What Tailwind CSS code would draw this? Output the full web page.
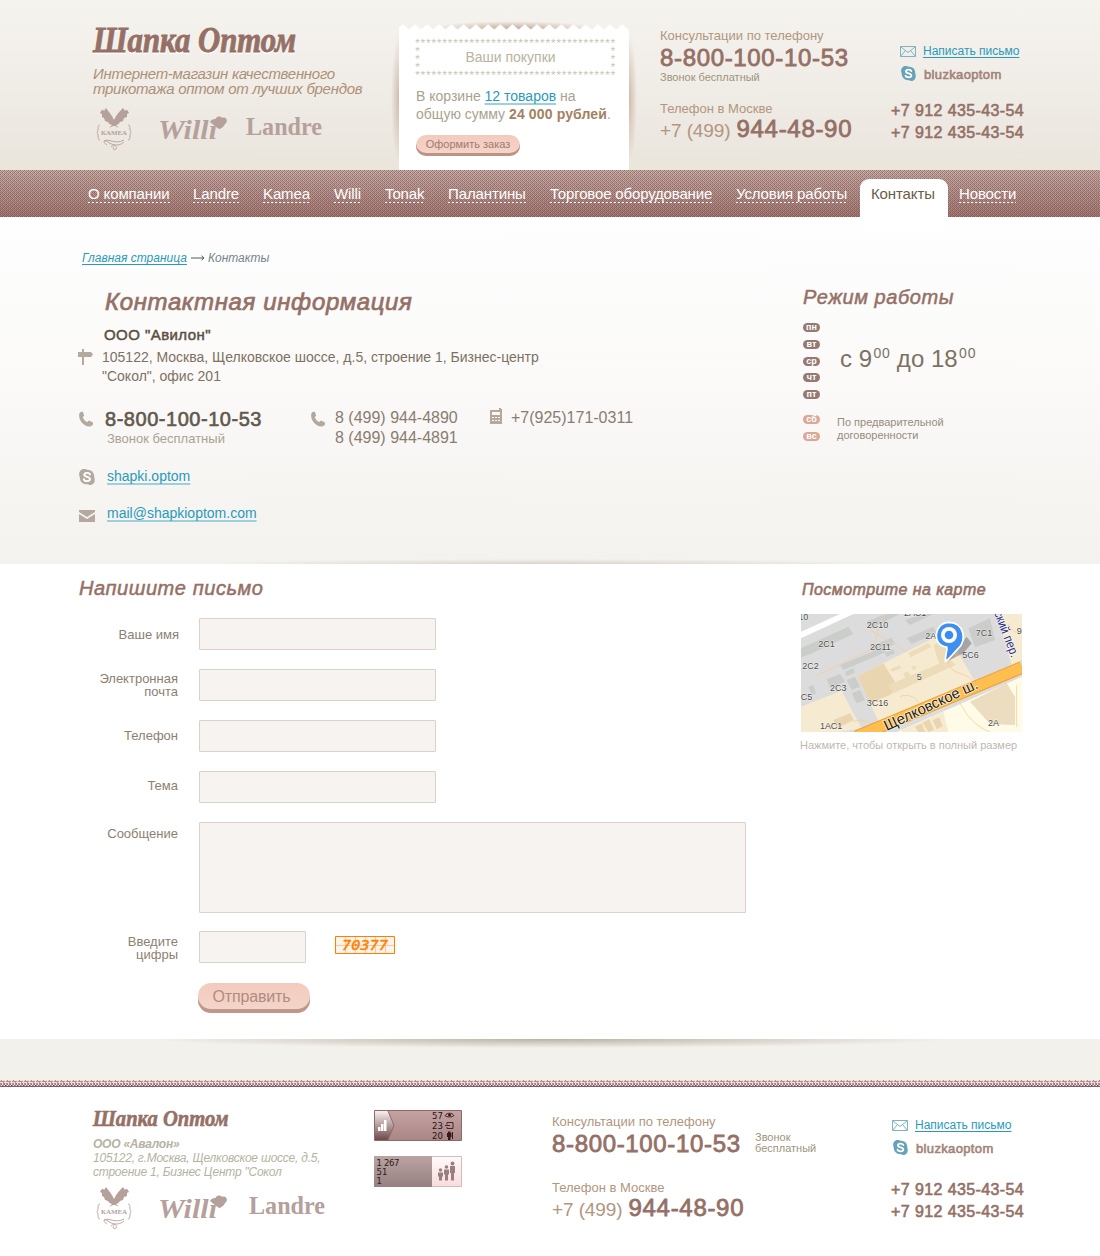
<!DOCTYPE html>
<html lang="ru">
<head>
<meta charset="utf-8">
<title>Шапка Оптом — Контакты</title>
<script src="https://cdn.jsdelivr.net/npm/@tailwindcss/browser@4"></script>
</head>
<body class="w-[1100px] h-[1256px] overflow-hidden bg-white font-['Liberation_Sans',Arial,sans-serif] whitespace-nowrap">

<!-- shared symbols -->
<svg class="absolute w-0 h-0" aria-hidden="true">
  <defs>
    <pattern id="zig" width="12.2" height="6" patternUnits="userSpaceOnUse" x="-2.4"><path d="M0 6V5.5L6.1 0.3L12.2 5.5V6Z" fill="#fff"/></pattern>
    <pattern id="star" width="5.43" height="6" patternUnits="userSpaceOnUse"><path d="M2.5 .8V3M2.5 3L.5 2.300M2.5 3L4.5 2.300M2.5 3L1.200 4.800M2.5 3L3.800 4.800" stroke="#c0beae" stroke-width=".8" fill="none"/></pattern>
    <pattern id="weave" width="4" height="4" patternUnits="userSpaceOnUse"><path d="M0 0h1v1H0zM2 0h1v1H2zM1 1h1v1H1zM3 1h1v1H3zM0 2h1v1H0zM2 2h1v1H2zM1 3h1v1H1zM3 3h1v1H3z" fill="#5d3a36" opacity=".3"/><path d="M0 0h1v1H0zM2 2h1v1H2z" fill="#5d3a36" opacity=".3"/><path d="M1 0h1v1H1zM3 2h1v1H3z" fill="#ecd8d2" opacity=".25"/></pattern>
    <pattern id="thread" width="6" height="7" patternUnits="userSpaceOnUse"><path d="M0 0h6v7H0z" fill="#ebe0de"/><path d="M0 1h5v1H0zM1 0h1v2H1zM0 3h1v3H0zM3 2h1v4H3zM1 3h1v1H1z" fill="#b58f90"/><path d="M1 4h1v1H1zM4 3h1v2H4zM2 5h1v1H2z" fill="#8f797d"/><path d="M0 6h6v1H0z" fill="#7d5c70"/><path d="M5 5h1v1H5z" fill="#5f4557"/></pattern>
    <symbol id="wordmark" viewBox="0 0 206 40"><g font-family="Liberation Serif" font-size="36" font-weight="bold" font-style="italic"><text x="1" y="31.5" textLength="203" lengthAdjust="spacingAndGlyphs" fill="#fff">Шапка Оптом</text><text x="1" y="30.300" textLength="203" lengthAdjust="spacingAndGlyphs" fill="#957066" stroke="#957066" stroke-width=".9">Шапка Оптом</text></g></symbol>
    <symbol id="kamea" viewBox="0 0 36 44"><g fill="#b5a09b"><path d="M4 5C6 1 7 1 8 3L10 0C12 3 16 7 18 12C20 7 24 3 27 0L29 3C30 1 31 1 33 5L31 6L31 9L28 10L27 13L24 14C23 16 21 17 20 17L23 20L19 18L17 18L13 20L16 17C14 16 13 16 12 14L9 13L8 10L6 9L6 6Z"/><text x="5" y="26.500" font-family="Liberation Serif" font-size="7" font-weight="bold" textLength="26" lengthAdjust="spacingAndGlyphs">КАМЕА</text></g><g fill="none" stroke="#b5a09b" stroke-width=".9"><path d="M4 17C1 17 3 22 1 24.500C3 27 1 32 4 32M32 17C35 17 33 22 35 24.500C33 27 35 32 32 32"/><path d="M8 33C13 30 19 37 28 32M11 37C6 34 8 31 12 34C17 38 24 38 28 34M15 39C18 36 22 38 20 41C18 43 16 40 18 39"/></g></symbol>
    <symbol id="willi" viewBox="0 0 70 26"><text x="0" y="22.500" font-family="Liberation Serif" font-size="28" font-weight="bold" font-style="italic" textLength="59" lengthAdjust="spacingAndGlyphs" fill="#b5a09b">Willı</text><circle cx="36" cy="4" r="0" /><path d="M52 6C54 2 58 4 58 2C61-1 64 1 64 2C68 0 71 5 67 8C66 11 63 12 62 13C60 13 57 10 52 6Z" fill="#b5a09b"/></symbol>
    <symbol id="landre" viewBox="0 0 78 24"><text x="0" y="18" font-family="Liberation Serif" font-size="24.500" font-weight="bold" textLength="76" lengthAdjust="spacingAndGlyphs" fill="#b5a09b">Landre</text></symbol>
    <symbol id="envelope" viewBox="0 0 16 11"><path d="M.5.5h15v10H.5zM.8.9L8 6.500L15.200.900M.8 10.200L5 5M15.200 10.200L11 5" fill="none" stroke="#7fb3c4" stroke-width="1"/></symbol>
    <symbol id="skype" viewBox="0 0 16 16"><path d="M5 0C6.500 0 7 .700 8.500.700C13 .700 15.500 4 15.200 8C16.500 11 15.500 16 11 16C9.500 16 9 15.300 8 15.300C3.500 15.300.600 12 .800 8C-.800 5 .500 0 5 0Z" fill="currentColor"/><path d="M11 5.400C10.300 3.400 5.300 3.200 5.300 5.800C5.300 8.500 11 7.200 11 10.100C11 12.800 5.400 12.700 4.800 10.200" fill="none" stroke="#fff" stroke-width="1.900" stroke-linecap="round"/></symbol>
    <symbol id="handset" viewBox="0 0 14 16"><path d="M.300 3C.800 .600 3 .400 4 1L5.200 4.800L3.800 6C4.300 8 6 10.200 8.300 11L10 9.600L14 11.500C14.500 13.500 13 15.300 10.500 15.500C4.500 15.700-.800 8.500 .300 3Z" fill="#b3a99e"/></symbol>
  </defs>
</svg>

<header class="relative flex h-[170px] bg-[linear-gradient(to_bottom,#f5f3ee_0,#f2efea_60px,#ece7e0_140px,#ebe6da_170px)]">
  <div class="w-[399px] pl-[92px] pt-[22px]">
    <svg class="block w-[206px] h-10"><use href="#wordmark"/></svg>
    <p class="mt-1 text-[15px] leading-[15px] italic text-[#ae9078] tracking-[-0.28px] pl-px">Интернет-магазин качественного<br>трикотажа оптом от лучших брендов</p>
    <div class="mt-3 flex">
      <svg class="ml-1 w-9 h-11"><use href="#kamea"/></svg>
      <svg class="ml-[26px] mt-2 w-[70px] h-[26px]"><use href="#willi"/></svg>
      <svg class="ml-[18px] mt-[9px] w-[78px] h-6"><use href="#landre"/></svg>
    </div>
  </div>

  <div class="relative w-[230px] pt-6">
    <div class="absolute left-[-8px] top-[34px] w-4 h-[130px] bg-[radial-gradient(ellipse_at_center,#d0bba9_0%,transparent_70%)]"></div>
    <div class="absolute right-[-8px] top-[34px] w-4 h-[130px] bg-[radial-gradient(ellipse_at_center,#d0bba9_0%,transparent_70%)]"></div>
    <div class="absolute left-[30px] top-[21px] w-[170px] h-4 bg-[radial-gradient(ellipse_at_center,#c2a893_0%,transparent_70%)]"></div>
    <div class="relative">
      <svg class="block w-[230px] h-[6px]"><rect width="230" height="6" fill="url(#zig)"/></svg>
      <div class="h-[140px] bg-white pt-2 pl-4">
        <div class="grid w-[201px] h-[38px] justify-items-center">
          <svg class="[grid-area:1/1] w-[201px] h-[38px]"><rect width="201" height="6" fill="url(#star)"/><g transform="translate(0 32)"><rect width="201" height="6" fill="url(#star)"/></g><g transform="translate(0 8)"><rect width="5.400" height="6" fill="url(#star)"/></g><g transform="translate(0 16)"><rect width="5.400" height="6" fill="url(#star)"/></g><g transform="translate(0 24)"><rect width="5.400" height="6" fill="url(#star)"/></g><g transform="translate(195.500 8)"><rect width="5.400" height="6" fill="url(#star)"/></g><g transform="translate(195.500 16)"><rect width="5.400" height="6" fill="url(#star)"/></g><g transform="translate(195.500 24)"><rect width="5.400" height="6" fill="url(#star)"/></g></svg>
          <h2 class="[grid-area:1/1] mt-[10px] ml-[-10px] text-[14px] leading-[18px] text-[#b9b3a0]">Ваши покупки</h2>
        </div>
        <p class="mt-[11px] pl-px text-[14px] leading-[18px] text-[#aaa28e]">В корзине <a class="text-[#2a9abb] underline decoration-2 underline-offset-2 decoration-[#9ccfe0] [text-decoration-skip-ink:none]">12 товаров</a> на<br>общую сумму <b class="text-[#a5805f] tracking-[0.13px]">24 000 рублей</b>.</p>
        <button class="mt-3 ml-px block w-[104px] h-[21px] rounded-[10px] bg-[linear-gradient(#f2cbbd,#f5d6cb)] shadow-[inset_0_-3px_0_#bf9384] text-[11px] leading-[12px] pb-[3px] text-[#a07a6d]">Оформить заказ</button>
      </div>
    </div>
  </div>

  <div class="w-[262px] pl-[31px] pt-7">
    <p class="text-[13px] leading-4 text-[#b2967f]">Консультации по телефону</p>
    <p class="text-[24px] leading-7 tracking-[0.66px] text-[#957066] [-webkit-text-stroke:0.8px]">8-800-100-10-53</p>
    <p class="-mt-px text-[11px] leading-3 text-[#9d957b]">Звонок бесплатный</p>
    <p class="mt-[18px] text-[13px] leading-4 text-[#b2967f]">Телефон в Москве</p>
    <p class="-mt-0.5 text-[24px] leading-7 tracking-[0.7px] text-[#957066] [-webkit-text-stroke:0.8px]"><span class="text-[19px] leading-none tracking-[-0.1px] text-[#b2967f] [-webkit-text-stroke:0px]">+7 (499)</span><span class="ml-[6px]">944-48-90</span></p>
  </div>

  <div class="pt-11">
    <div class="flex pl-[9px]"><svg class="mt-0.5 w-4 h-[11px]"><use href="#envelope"/></svg><a class="ml-[7px] text-[12px] leading-[14px] text-[#2a9abb] underline underline-offset-2 decoration-1 [text-decoration-skip-ink:none]">Написать письмо</a></div>
    <div class="mt-2 flex pl-[10px] text-[#67a3b8]"><svg class="w-[15px] h-[15px]"><use href="#skype"/></svg><span class="mt-px ml-2 text-[13px] leading-4 tracking-[0.35px] text-[#a38379] [-webkit-text-stroke:0.6px]">bluzkaoptom</span></div>
    <p class="mt-[17px] text-[16px] leading-[22px] tracking-[0.4px] text-[#957066] [-webkit-text-stroke:0.6px]">+7 912 435-43-54<br>+7 912 435-43-54</p>
  </div>
</header>

<nav class="relative z-10 h-[47px] bg-[linear-gradient(#c6a9a3,#a0746f)]">
  <svg class="absolute inset-0 w-full h-full"><rect width="1100" height="47" fill="url(#weave)"/></svg>
  <ul class="relative flex items-start pl-[88px] pt-[14px] text-[15px] leading-5 text-white tracking-[-0.12px] [&_a]:block [&_a]:h-[19px] [&_a]:bg-[repeating-linear-gradient(90deg,#fff_0_2px,transparent_2px_4px)] [&_a]:bg-no-repeat [&_a]:bg-[length:100%_1px] [&_a]:bg-bottom">
    <li class="w-[82px]"><a>О компании</a></li>
    <li class="ml-[23px] w-[46px]"><a>Landre</a></li>
    <li class="ml-6 w-[47px]"><a>Kamea</a></li>
    <li class="ml-6 w-[27px]"><a>Willi</a></li>
    <li class="ml-6 w-[39px]"><a>Tonak</a></li>
    <li class="ml-6 w-[78px]"><a>Палантины</a></li>
    <li class="ml-6 w-[162px] tracking-[-0.16px]"><a>Торговое оборудование</a></li>
    <li class="ml-6 w-[111px]"><a>Условия работы</a></li>
    <li class="ml-[13px] -mt-[5px] w-[88px] h-[52px] rounded-[9px] bg-white pt-[5px] pl-[11px] text-[#6d5c4a]">Контакты</li>
    <li class="ml-[11px] w-[57px]"><a>Новости</a></li>
  </ul>
</nav>

<main>
  <section class="relative flex h-[347px] bg-[linear-gradient(#fefefe,#fbfaf9_45%,#f4f2ee)]">
    <div class="absolute left-[200px] bottom-0 w-[700px] h-[5px] bg-[radial-gradient(ellipse_at_bottom,#d9d3ca_0%,transparent_70%)]"></div>
    <div class="w-[802px] pt-[34px]">
      <div class="flex pl-[82px] text-[12px] leading-[14px] italic text-[#74858a]"><a class="text-[#2a9abb] underline underline-offset-2 decoration-1 [text-decoration-skip-ink:none]">Главная страница</a><svg class="ml-1 mt-1 mr-[3px] w-[14px] h-[6px]" viewBox="0 0 14 6"><path d="M0 3h13M10.500.800L13 3L10.500 5.200" fill="none" stroke="#4c5a5e"/></svg><span>Контакты</span></div>
      <h1 class="mt-[23px] pl-[105px] text-[24px] leading-7 italic tracking-[0.62px] text-[#957066] [-webkit-text-stroke:0.7px]">Контактная информация</h1>
      <h2 class="mt-[9px] pl-[104px] text-[15px] leading-5 tracking-[0.44px] text-[#5c4f43] [-webkit-text-stroke:0.5px]">ООО "Авилон"</h2>
      <div class="mt-[3px] flex pl-[78px] text-[14px] leading-[19px] text-[#7d7163]">
        <svg class="mt-px w-[15px] h-4" viewBox="0 0 15 16"><path d="M4 0h2v3h7l2 2.500L13 8H6v8H4V8H0V3h4Z" fill="#b3a99e"/></svg>
        <p class="ml-[9px]">105122, Москва, Щелковское шоссе, д.5, строение 1, Бизнес-центр<br>"Сокол", офис 201</p>
      </div>
      <div class="mt-[21px] flex pl-[79px]">
        <div class="flex w-[232px]"><svg class="mt-1 w-[14px] h-4"><use href="#handset"/></svg><div class="ml-3"><p class="text-[20px] leading-6 tracking-[0.53px] text-[#62584d] [-webkit-text-stroke:0.6px]">8-800-100-10-53</p><p class="pl-0.5 text-[13px] leading-4 text-[#a9a392]">Звонок бесплатный</p></div></div>
        <div class="flex w-[179px]"><svg class="mt-1 w-[14px] h-4"><use href="#handset"/></svg><p class="ml-[10px] mt-px text-[16px] leading-5 text-[#8a7d70]">8 (499) 944-4890<br>8 (499) 944-4891</p></div>
        <div class="flex"><svg class="mt-px w-3 h-4" viewBox="0 0 12 16"><path d="M9 0h2v1H12v15H0V2H9ZM2 4v3h8V4ZM2 9v1h2V9ZM5 9v1h2V9ZM8 9v1h2V9ZM2 12v1h2v-1ZM5 12v1h2v-1ZM8 12v1h2v-1Z" fill="#b3a99e" fill-rule="evenodd"/></svg><p class="ml-[9px] mt-px text-[16px] leading-5 text-[#8a7d70]">+7(925)171-0311</p></div>
      </div>
      <div class="mt-[19px] flex pl-[79px] text-[14px] leading-[18px] text-[#b3a99e]"><svg class="mt-0.5 w-4 h-4"><use href="#skype"/></svg><a class="ml-3 text-[#2a9abb] underline decoration-2 underline-offset-2 decoration-[#9ccfe0] [text-decoration-skip-ink:none]">shapki.optom</a></div>
      <div class="mt-[19px] flex pl-[79px] text-[14px] leading-[18px]"><svg class="mt-[6px] w-4 h-3" viewBox="0 0 16 12"><path d="M0 0h16v2L8 7L0 2ZM0 4L8 9L16 4V12H0Z" fill="#b3a99e"/></svg><a class="ml-3 text-[#2a9abb] underline decoration-2 underline-offset-2 decoration-[#9ccfe0] [text-decoration-skip-ink:none]">mail@shapkioptom.com</a></div>
    </div>
    <div class="pt-[68px]">
      <h2 class="pl-px text-[20px] leading-6 italic tracking-[0.57px] text-[#957066] [-webkit-text-stroke:0.5px]">Режим работы</h2>
      <div class="mt-[14px] flex pl-px">
        <ul class="flex flex-col gap-[7.75px] text-[9px] leading-[8px] font-bold text-white text-center [&>li]:w-[17px] [&>li]:h-[9px] [&>li]:rounded-full [&>li]:bg-[#957a74]"><li>пн</li><li>вт</li><li>ср</li><li>чт</li><li>пт</li></ul>
        <p class="ml-5 mt-[22px] text-[24px] leading-7 text-[#7d7163]">с 9<span class="inline-block align-[9px] ml-[1.5px] mr-[-0.5px] text-[14px] leading-none tracking-[0.8px]">00</span> до 18<span class="inline-block align-[9px] ml-[1.5px] text-[14px] leading-none tracking-[0.8px]">00</span></p>
      </div>
      <div class="mt-4 flex pl-px">
        <ul class="flex flex-col gap-2 text-[9px] leading-[8px] font-bold text-white text-center [&>li]:w-[17px] [&>li]:h-[9px] [&>li]:rounded-full [&>li]:bg-[#dba895]"><li>сб</li><li>вс</li></ul>
        <p class="ml-[17px] mt-px text-[11px] leading-[13px] text-[#978c7f]">По предварительной<br>договоренности</p>
      </div>
    </div>
  </section>

  <section class="flex h-[475px] bg-white">
    <form class="w-[800px] pt-3 text-[13px] leading-[13px] text-[#8d8073] [&_label]:w-[179px] [&_label]:text-right [&_label]:mr-5 [&_input]:h-8 [&_input]:w-[237px] [&_input]:border [&_input]:border-[#d8d2c8] [&_input]:rounded-[1px] [&_input]:bg-[#f7f3f1]">
      <h2 class="pl-[79px] text-[20px] leading-6 italic tracking-[0.57px] text-[#957066] [-webkit-text-stroke:0.5px]">Напишите письмо</h2>
      <div class="mt-[18px] flex flex-col gap-[19px]">
        <div class="flex"><label class="pt-[10px]">Ваше имя</label><input></div>
        <div class="flex h-8"><label class="pt-[3px] pr-px">Электронная<br>почта</label><input></div>
        <div class="flex"><label class="pt-[9px] pr-px">Телефон</label><input></div>
        <div class="flex"><label class="pt-2 pr-px">Тема</label><input></div>
        <div class="flex h-[91px]"><label class="pt-[5px] pr-px">Сообщение</label><textarea class="block w-[547px] h-[91px] resize-none border border-[#d8d2c8] rounded-[1px] bg-[#f7f3f1]"></textarea></div>
        <div class="-mt-px flex h-8"><label class="pt-1 pr-px">Введите<br>цифры</label><div class="w-[107px]"><input class="max-w-[107px]"></div>
          <svg class="ml-[29px] mt-[5px] w-[60px] h-[18px]" viewBox="0 0 60 18"><path d="M.5.5h59v17H.5z" fill="#fff3ea"/><path d="M10.500 1v16M20.500 1v16M30.500 1v16M40.500 1v16M50.500 1v16M1 9.500h58" stroke="#fbc79b" fill="none"/><path d="M.5.5h59v17H.5z" fill="none" stroke="#ff8000"/><text x="7" y="14" font-family="DejaVu Sans Mono" font-style="italic" font-size="13.500" textLength="46" lengthAdjust="spacingAndGlyphs" fill="#ff8000" stroke="#ff8000" stroke-width=".4">70377</text></svg>
        </div>
      </div>
      <button type="button" class="mt-5 ml-[198px] block w-[112px] h-[30px] rounded-[13px] bg-[linear-gradient(#f2cbbd,#f5d6cb)] shadow-[inset_0_-4px_0_#c0978a] pb-[3px] pr-[5px] text-[16px] leading-5 tracking-[-0.15px] text-[#b08c80]">Отправить</button>
    </form>

    <aside class="pt-4">
      <h2 class="pl-0.5 text-[16px] leading-5 italic tracking-[0.44px] text-[#957066] [-webkit-text-stroke:0.6px]">Посмотрите на карте</h2>
      <svg class="mt-[14px] ml-px block w-[221px] h-[118px]" viewBox="33 132 663 354">
        <path d="M33 132h663v354H33z" fill="#dcdcdc"/>
        <path d="M33 185L150 132H190L33 205Z" fill="#fff"/>
        <path d="M203 318L430 205L500 240L552 330L270 465Z" fill="#f6ebd0"/>
        <path d="M33 410L155 362L190 430L215 475L150 486H33Z" fill="#f6ebd0"/>
        <path d="M203 318L280 280L325 352L300 375L240 400Z" fill="#e9d5b0"/>
        <path d="M295 345L480 268L497 285L310 370Z" fill="#eddcba"/>
        <path d="M430 225L475 205L495 262L450 290Z" fill="#eddcba"/>
        <path d="M355 248L415 220L425 230L362 262ZM300 298L328 286L334 294L306 306ZM340 310L355 304L362 318L346 324ZM364 290L376 286L378 296L368 300Z" fill="#eddcba"/>
        <path d="M635 132H696V270L665 285L640 200Z" fill="#f6ebd0"/>
        <path d="M320 486L696 320V486Z" fill="#fffbe6"/>
        <path d="M540 395L650 340L675 380V465L600 462Z" fill="#ecdcc0"/>
        <path d="M335 480L460 425L475 486H335Z" fill="#f6ebd0"/>
        <path d="M375 470L395 460L405 486H385ZM398 458L418 448L432 480L415 486ZM428 450L448 442L458 468L440 478Z" fill="#e9d5b0"/>
        <path d="M130 450L180 430L192 450L140 475Z" fill="#e9d5b0"/>
        <g fill="#cbcdca"><path d="M33 235L175 170L190 192L55 255L33 262ZM230 155L285 132H330L240 178ZM240 230L305 203L315 222L250 248ZM350 205L430 170L440 190L365 222ZM345 150L400 132H430L360 165ZM150 285L280 232L290 245L160 300ZM535 175L600 145L615 210L555 232ZM110 328L150 312L165 335L120 355ZM170 330L195 320L210 350L185 360ZM185 370L210 360L225 390L200 400ZM55 350L70 345L78 370L65 375ZM165 305L190 295L195 308L170 318ZM285 248L310 238L315 250L290 260Z"/></g>
        <g fill="none" stroke="#f3cfa0" stroke-width="2.500"><path d="M75 320L240 240C270 200 260 160 285 132M240 180L350 245M475 270C480 320 520 300 545 330M190 455C230 440 240 470 270 460M510 400C530 430 540 460 600 486M330 380C350 370 380 380 385 400M655 160C670 200 690 180 696 190M680 345V470"/></g>
        <path d="M200 500L696 292" stroke="#f0a030" stroke-width="38"/><path d="M200 500L696 292" stroke="#ffbf50" stroke-width="32"/>
        <g font-family="Liberation Sans" font-size="27" fill="#4d4d4d" stroke="#fff" stroke-width="3" stroke-opacity=".6" paint-order="stroke">
          <text x="25" y="150">10</text><text x="342" y="138">2АС1</text><text x="230" y="173">2С10</text><text x="85" y="230">2С1</text><text x="240" y="240">2С11</text><text x="37" y="296">2С2</text><text x="120" y="362">2С3</text><text x="32" y="389">С5</text><text x="230" y="407">3С16</text><text x="90" y="478">1АС1</text><text x="406" y="207">2А</text><text x="557" y="197">7С1</text><text x="517" y="263">5С6</text><text x="380" y="329">5</text><text x="594" y="469">2А</text><text x="680" y="193">9</text>
        </g>
        <text transform="translate(290 483) rotate(-25)" font-family="Liberation Sans" font-size="45" textLength="306" lengthAdjust="spacingAndGlyphs" fill="#222" stroke="#fff" stroke-width="5" stroke-opacity=".7" paint-order="stroke">Щелковское ш.</text>
        <text transform="translate(612 128) rotate(69)" font-family="Liberation Sans" font-size="38" textLength="146" lengthAdjust="spacingAndGlyphs" fill="#2c2c88" stroke="#fff" stroke-width="4" stroke-opacity=".7" paint-order="stroke">ский пер.</text>
        <path d="M475 272L530 200L545 220L520 250Z" fill="#000" opacity=".25"/>
        <path d="M466 274C466 250 474 236 470 231C425 228 430 158 477 157C525 158 530 215 505 235C490 250 480 265 466 274Z" fill="#3f8ff0" stroke="#fff" stroke-width="5"/>
        <circle cx="477" cy="195" r="24" fill="#fff"/><circle cx="477" cy="195" r="13" fill="#3a8df0"/>
      </svg>
      <p class="mt-[7px] text-[11px] leading-3 text-[#bfb8b1]">Нажмите, чтобы открыть в полный размер</p>
    </aside>
  </section>
</main>

<div class="h-[41px] bg-[radial-gradient(ellipse_400px_9px_at_50%_0,#bbb2a5_0%,transparent_100%),linear-gradient(#f3f1ec,#f3f1ec)]"></div>
<svg class="block w-full h-[7px]"><rect width="1100" height="7" fill="url(#thread)"/></svg>

<footer class="flex">
  <div class="w-[374px] pl-[92px] pt-[19px]">
    <svg class="block w-[138px] h-[27px]"><use href="#wordmark"/></svg>
    <p class="mt-1 pl-px text-[12px] leading-[14px] italic tracking-[-0.23px] text-[#b5b3a1]"><b>ООО «Авалон»</b><br>105122, г.Москва, Щелковское шоссе, д.5,<br>строение 1, Бизнес Центр "Сокол</p>
    <div class="mt-2 flex">
      <svg class="ml-1 w-9 h-11"><use href="#kamea"/></svg>
      <svg class="ml-[26px] mt-2 w-[70px] h-[26px]"><use href="#willi"/></svg>
      <svg class="ml-[21px] mt-[9px] w-[78px] h-6"><use href="#landre"/></svg>
    </div>
  </div>
  <div class="flex w-[178px] flex-col gap-[15px] pt-[23px]">
    <svg class="w-[88px] h-[31px]" viewBox="0 0 88 31"><defs><linearGradient id="g1" x2="0" y2="1"><stop stop-color="#c6a3a3"/><stop offset="1" stop-color="#a98585"/></linearGradient><linearGradient id="g2" x2="0" y2="1"><stop stop-color="#faeeee"/><stop offset="1" stop-color="#6f4949"/></linearGradient></defs><path d="M.5.500h87v30H.5z" fill="url(#g1)" stroke="#8d6a6a"/><path d="M1 1h13l6 14.500L14 30H1Z" fill="url(#g2)"/><path d="M14 1l6 14.500L14 30" fill="none" stroke="#8d6a6a"/><path d="M4 17h2.500v4H4zM7 14h2.500v7H7zM10 10h2.500v11H10z" fill="#fff"/><g font-family="DejaVu Sans" font-size="8.500" fill="#221414"><text x="58" y="9">57</text><text x="58" y="19">23</text><text x="58" y="29">20</text></g><g fill="none" stroke="#4b2525"><path d="M71 5.500C73 2.500 78 2.500 80 5.500C78 7.500 73 7.500 71 5.500Z"/><path d="M73 14.500V12.500H79V18.500H73V17M71 15.500H76"/></g><circle cx="75.500" cy="5" r="1.500" fill="#3a1818"/><path d="M74 21.500h2.500v1.500h1v4h-1v3h-2.500v-3h-1v-4h1zM78 22h1v7h-1z" fill="#3a1818"/></svg>
    <svg class="w-[88px] h-[31px]" viewBox="0 0 88 31"><defs><linearGradient id="g3" x2="0" y2="1"><stop stop-color="#bba3a3"/><stop offset="1" stop-color="#968080"/></linearGradient><linearGradient id="g4" x2="0" y2="1"><stop stop-color="#fffafa"/><stop offset="1" stop-color="#f8dcdc"/></linearGradient></defs><path d="M.5.500h87v30H.5z" fill="url(#g4)" stroke="#d8b9b9"/><path d="M0 0h58v31H0z" fill="url(#g3)"/><g font-family="DejaVu Sans" font-size="8.500" fill="#2b1c1c"><text x="2.500" y="9.500" textLength="23">1 267</text><text x="2.500" y="18.500">51</text><text x="2.500" y="27.500">1</text></g><g fill="#9b7f7f"><circle cx="66.500" cy="14" r="1.700"/><path d="M64 16.500h5v4h-1v4h-3v-4h-1z"/><circle cx="72.500" cy="11" r="1.800"/><path d="M70 13.500h5v5h-1v6h-3v-6h-1z"/><circle cx="78.500" cy="7.500" r="1.900"/><path d="M76 10h5v7h-1v7.500h-3V17h-1z"/></g></svg>
  </div>
  <div class="w-[339px] pt-[27px]">
    <p class="text-[13px] leading-4 text-[#b2967f]">Консультации по телефону</p>
    <div class="flex"><p class="w-[203px] text-[24px] leading-7 tracking-[0.66px] text-[#957066] [-webkit-text-stroke:0.8px]">8-800-100-10-53</p><p class="mt-0.5 text-[11px] leading-[11px] text-[#9d957b]">Звонок<br>бесплатный</p></div>
    <p class="mt-[22px] text-[13px] leading-4 text-[#b2967f]">Телефон в Москве</p>
    <p class="-mt-0.5 text-[24px] leading-7 tracking-[0.7px] text-[#957066] [-webkit-text-stroke:0.8px]"><span class="text-[19px] leading-none tracking-[-0.1px] text-[#b2967f] [-webkit-text-stroke:0px]">+7 (499)</span><span class="ml-[6px]">944-48-90</span></p>
  </div>
  <div class="pt-[31px]">
    <div class="flex pl-px"><svg class="mt-0.5 w-4 h-[11px]"><use href="#envelope"/></svg><a class="ml-[7px] text-[12px] leading-[14px] text-[#2a9abb] underline underline-offset-2 decoration-1 [text-decoration-skip-ink:none]">Написать письмо</a></div>
    <div class="mt-2 flex pl-0.5 text-[#67a3b8]"><svg class="w-[15px] h-[15px]"><use href="#skype"/></svg><span class="mt-px ml-2 text-[13px] leading-4 tracking-[0.35px] text-[#a38379] [-webkit-text-stroke:0.6px]">bluzkaoptom</span></div>
    <p class="mt-[22px] text-[16px] leading-[22px] tracking-[0.4px] text-[#957066] [-webkit-text-stroke:0.6px]">+7 912 435-43-54<br>+7 912 435-43-54</p>
  </div>
</footer>
</body>
</html>
